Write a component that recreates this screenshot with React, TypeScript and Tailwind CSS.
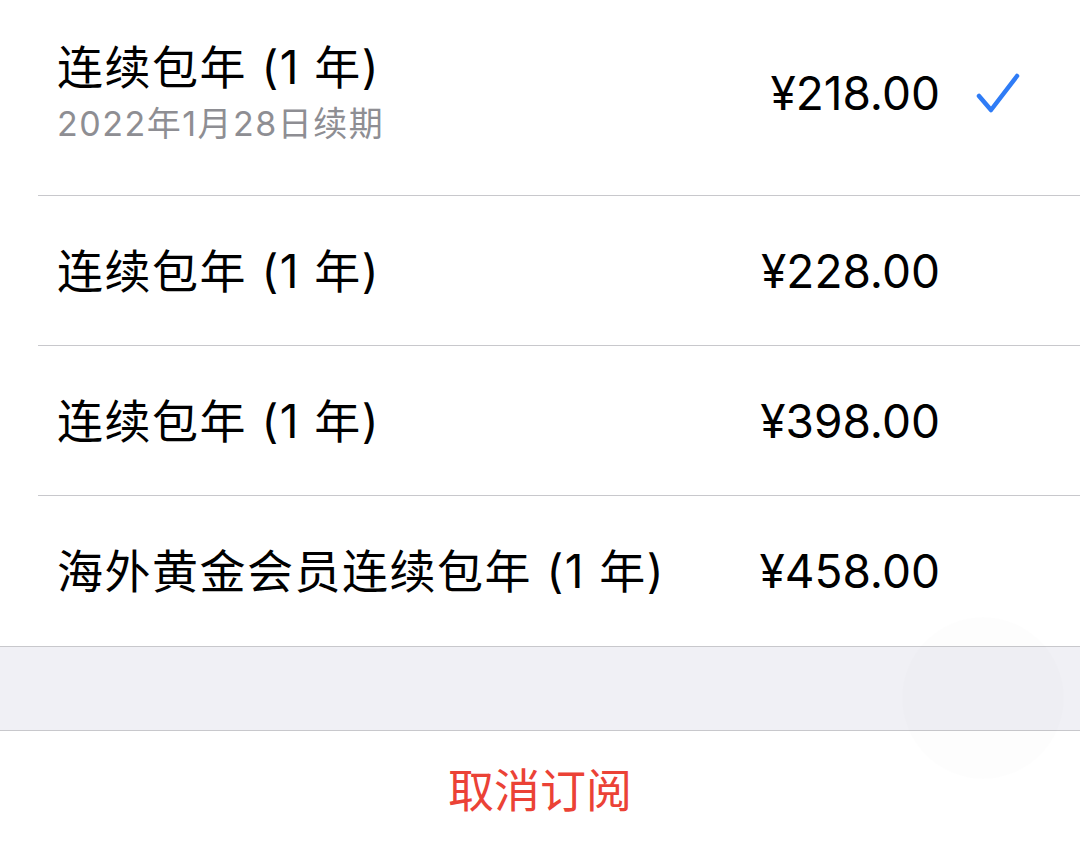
const font = { fontFamily: '"Inter", "Noto Sans CJK SC", sans-serif' };

type Plan = { title: string; sub?: string; price: string; selected?: boolean };

const plans: Plan[] = [
  { title: '连续包年 (1 年)', sub: '2022年1月28日续期', price: '¥218.00', selected: true },
  { title: '连续包年 (1 年)', price: '¥228.00' },
  { title: '连续包年 (1 年)', price: '¥398.00' },
  { title: '海外黄金会员连续包年 (1 年)', price: '¥458.00' },
];

const Check = () => (
  <svg width="44" height="40" viewBox="0 0 44 40" fill="none">
    <path d="M3 23 L15 37 L41 3" stroke="#2f7cf6" strokeWidth="4.5" strokeLinecap="round" strokeLinejoin="round" />
  </svg>
);

const Row = ({ plan, last }: { plan: Plan; last: boolean }) => (
  <div className={`ml-[38px] flex items-center ${plan.sub ? 'h-[196px] pb-[10px]' : 'h-[150px]'} ${last ? '' : 'border-b border-[#c8c8cc]'}`}>
    <div className="flex flex-1 flex-col pl-[19px]">
      <span className="text-[46px] leading-[52px] tracking-[1.5px] text-black">{plan.title}</span>
      {plan.sub && <span className="mt-[11px] text-[34px] leading-[40px] tracking-[1.5px] text-[#8e8e93]">{plan.sub}</span>}
    </div>
    <span className="text-[46px] leading-[52px] text-black">{plan.price}</span>
    <div className="flex w-[140px] justify-end pr-[60px]">{plan.selected && <Check />}</div>
  </div>
);

const App = () => {
  return (
    <div className="relative h-[843px] w-[1080px] overflow-hidden bg-white" style={font}>
      <div className="border-b border-[#c8c8cc]">
        {plans.map((p, i) => (
          <Row key={i} plan={p} last={i === plans.length - 1} />
        ))}
      </div>
      <div className="h-[84px] border-b border-[#c8c8cc] bg-[#f0f0f5]" />
      <div className="flex h-[118px] items-center justify-center">
        <span className="text-[46px] leading-[52px] text-[#eb4236]">取消订阅</span>
      </div>
      <div className="absolute left-[902px] top-[617px] h-[162px] w-[162px] rounded-full bg-black/[0.006]" />
    </div>
  );
};

export default App;
